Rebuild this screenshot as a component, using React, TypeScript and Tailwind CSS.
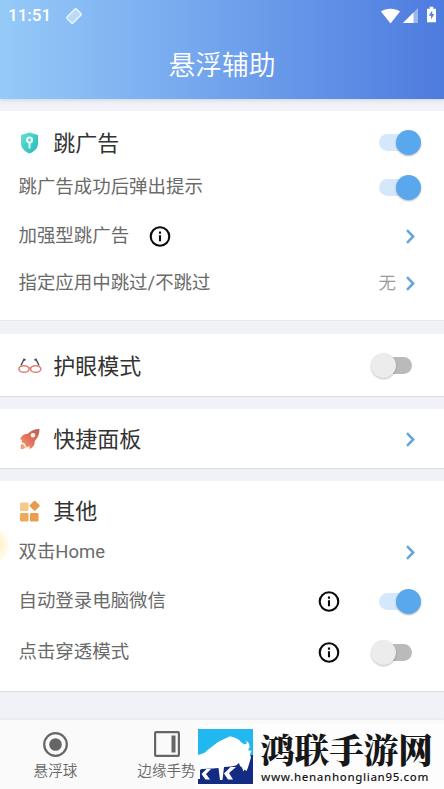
import React from "react";

const cjk = "font-['Roboto','Noto_Sans_CJK_SC',sans-serif]";

function Toggle({ on }: { on?: boolean }) {
  return on ? (
    <div className="relative h-[25px] w-[42px] shrink-0">
      <div className="absolute top-[4px] left-0 h-[17px] w-[34px] rounded-full bg-[#d5e8fb]" />
      <div className="absolute top-0 right-0 size-[25px] rounded-full bg-[#59a8ee] shadow-[0_1px_2px_rgba(0,0,0,0.3)]" />
    </div>
  ) : (
    <div className="relative mr-[9px] h-[25px] w-[41px] shrink-0">
      <div className="absolute top-[4px] right-0 h-[17px] w-[34px] rounded-full bg-[#bababa]" />
      <div className="absolute top-0 left-0 size-[25px] rounded-full bg-[#ececec] shadow-[0_1px_2px_rgba(0,0,0,0.25)]" />
    </div>
  );
}

function Chevron() {
  return (
    <svg className="mr-[6px] ml-[10px] h-[15px] w-[9px] shrink-0" viewBox="0 0 9 15" fill="none" stroke="#62a5df" strokeWidth="2.5">
      <path d="M1 1.2 7.2 7.5 1 13.8" />
    </svg>
  );
}

function Info({ className = "" }: { className?: string }) {
  return (
    <svg className={"size-[22px] shrink-0 " + className} viewBox="0 0 22 22" fill="none" stroke="#0a0a0a" strokeWidth="2.1">
      <circle cx="11" cy="10.500" r="9.300" />
      <path d="M11 9.300v6M11 5.500v2.200" />
    </svg>
  );
}

function Shield() {
  return (
    <svg className="size-[22px]" viewBox="0 0 22 22">
      <defs>
        <linearGradient id="shield" x1="0" y1="0" x2="1" y2="1">
          <stop stopColor="#69e0d3" />
          <stop offset="1" stopColor="#20b9b8" />
        </linearGradient>
      </defs>
      <path fill="url(#shield)" d="M10.500 0.500 19 3v8.500c0 4.800-3.700 8-8.500 10.100C5.700 19.500 2 16.300 2 11.500V3Z" />
      <circle cx="10.500" cy="8" r="2.500" fill="none" stroke="#ecfffd" strokeWidth="2.200" />
      <path d="M10.500 10.500v6" stroke="#ecfffd" strokeWidth="2" />
    </svg>
  );
}

function Glasses() {
  return (
    <svg className="h-[16px] w-[24px]" viewBox="0 0 24 16" fill="none">
      <path d="M3 7.500 6 1.300l1.600.8M21 7.500l-3-6.200-1.600.8" stroke="#42465e" strokeWidth="1.400" />
      <ellipse cx="6" cy="11" rx="5.100" ry="3.300" stroke="#df7d72" strokeWidth="1.500" />
      <ellipse cx="17.700" cy="11" rx="5.100" ry="3.300" stroke="#df7d72" strokeWidth="1.500" />
      <path d="M11 10.500q1-1 2 0" stroke="#df7d72" strokeWidth="1.500" />
    </svg>
  );
}

function Rocket() {
  return (
    <svg className="size-[22px]" viewBox="0 0 22 22">
      <defs>
        <linearGradient id="rocket" x1="1" y1="0" x2="0" y2="1">
          <stop stopColor="#b95d5c" />
          <stop offset=".5" stopColor="#e17059" />
          <stop offset="1" stopColor="#f2a274" />
        </linearGradient>
      </defs>
      <path fill="url(#rocket)" d="M20.500 1C15.600 1 11.800 2.500 8.500 6 5.400 5.500 2.800 7.500 1 11l2 1-.5 3 5 4.500 3-1.500v3c3.600-1.500 5.600-4.300 5.200-8C19 10 20.500 6 20.500 1Z" />
      <circle cx="14" cy="7.200" r="2.300" fill="#fff4ed" />
      <path fill="#f0a07a" d="M2.300 15.800c2.300-1 5 1.500 4.200 4-1.300 1.200-3 1.400-4.700 1.200-.3-1.600 0-3.800.5-5.200Z" />
      <path d="m2 15 3 .8 1.700 3.200" stroke="#fff6ef" strokeWidth="1.400" fill="none" />
    </svg>
  );
}

function Apps() {
  return (
    <svg className="size-[22px]" viewBox="0 0 22 22">
      <rect x="1" y="2.500" width="8.500" height="8.500" rx="1.200" fill="#f5c98b" />
      <rect x="1" y="13" width="8.500" height="8.500" rx="1.200" fill="#edaa5d" />
      <rect x="11" y="13" width="8.500" height="8.500" rx="1.200" fill="#e99d4d" />
      <rect x="11.800" y="1.900" width="7.700" height="7.700" rx="1" fill="#e69a4d" transform="rotate(45 15.650 5.750)" />
    </svg>
  );
}

function Heading({ icon, text, children, className }: { icon: React.ReactNode; text: string; children?: React.ReactNode; className: string }) {
  return (
    <div className={"flex items-center " + className}>
      <div className="flex w-[34.300px] shrink-0">{icon}</div>
      <h2 className="flex-1 pt-[2px] text-[22px] leading-[30px] text-[#333]">{text}</h2>
      {children}
    </div>
  );
}

function Row({ text, children, info, className }: { text: string; children: React.ReactNode; info?: boolean; className: string }) {
  return (
    <div className={"flex items-center text-[18.450px] text-[#6a6a6a] " + className}>
      <span className="-ml-[0.500px] leading-[27px] font-[380]">{text}</span>
      {info && <Info className="ml-[19.500px]" />}
      <div className="flex-1" />
      {children}
    </div>
  );
}

function Bison() {
  return (
    <svg className="h-[55px] w-[55px] shrink-0" viewBox="0 0 55 55">
      <path fill="#20b8ee" d="M0 0h55v27H0Z" />
      <path fill="#142b83" d="M0 26h55v29H0Z" />
      <path
        fill="#fff"
        d="M0 26C4 24.500 6 25 9 21.500L20 13 32 7.200C37 8.500 40 9.500 43 13c2 2 4.500 3 5.500 1.500 1-1.500-.5-2-1.500-3C50 12 52 15 51.500 18.500L50 21l3.500 1-1.500 3 1 3.500-3 10-1.500 3.500-2-1.500-1 2-1.500-4-2-1.500-1-3-3 2.500-5 1-7 .5-1.500 13H22l-1.500-12-6 .5-11 .5L2 41v9H0Z"
      />
      <path fill="#fff" d="M8.500 40H13l-5 5 4 5.500H7.500L3.500 45ZM32.500 38H38l-7 6 4 6.500h-5L26 44.500Z" />
    </svg>
  );
}

export default function App() {
  return (
    <main className={"relative flex h-[789px] w-[444px] flex-col overflow-hidden bg-[#f0f2f7] " + cjk}>
      <header className="z-10 h-[99px] shrink-0 bg-linear-to-r from-[#96caf8] to-[#4e7bdf] text-white shadow-[0_1px_4px_rgba(60,80,120,0.2)]">
        <div className="flex h-[31px] items-center pr-[8px] pl-[8px]">
          <span className="w-[43px] text-[17px] font-medium">11:51</span>
          <svg className="ml-[14px] size-[18px]" viewBox="0 0 17 17">
            <rect x="2.200" y="4.500" width="12.600" height="8" rx="1" transform="rotate(-45 8.500 8.500)" fill="#bddaf5" stroke="#e8f6ff" strokeWidth="1.300" />
          </svg>
          <div className="flex-1" />
          <svg className="h-[16px] w-[19px]" viewBox="0 0 19 16"><path fill="#fff" d="M0 3.500C5-.3 14-.3 19 3.500L9.500 15.500Z" /></svg>
          <svg className="ml-[3px] h-[15px] w-[15px]" viewBox="0 0 15 15"><path fill="#9bb8ee" d="M15 0v15H0Z" /><path fill="#fff" d="M10.500 4.500V15H0Z" /></svg>
          <svg className="mb-[2px] ml-[9px] h-[17px] w-[9px]" viewBox="0 0 10 17"><path fill="#fff" d="M3 0h4v2h3v15H0V2h3Z" /><path fill="#5280df" d="M5.800 4 2 10h2.500v4L8 8H5.800Z" /></svg>
        </div>
        <h1 className="pt-[15px] text-center text-[26.800px] leading-[40px] font-[350]">悬浮辅助</h1>
      </header>

      <section className="mt-[12px] h-[210px] shrink-0 border-b border-[#e7e9ed] bg-white pr-[23px] pl-[19px]">
        <Heading className="h-[63px]" icon={<Shield />} text="跳广告"><Toggle on /></Heading>
        <Row className="h-[27px]" text="跳广告成功后弹出提示"><Toggle on /></Row>
        <Row className="mt-[22px] h-[27px]" text="加强型跳广告" info><Chevron /></Row>
        <Row className="mt-[20px] h-[27px]" text="指定应用中跳过/不跳过"><span className="text-[17.500px] font-[350] text-[#999]">无</span><Chevron /></Row>
      </section>

      <section className="mt-[13px] h-[63px] shrink-0 border-b border-[#dcdee2] bg-white pr-[23px] pl-[19px]">
        <Heading className="h-[63px]" icon={<span className="-ml-px"><Glasses /></span>} text="护眼模式"><Toggle /></Heading>
      </section>

      <section className="mt-[12px] h-[60px] shrink-0 border-b border-[#dcdee2] bg-white pr-[23px] pl-[19px]">
        <Heading className="h-[60px]" icon={<Rocket />} text="快捷面板"><Chevron /></Heading>
      </section>

      <section className="relative mt-[12px] h-[211px] shrink-0 border-b border-[#dcdee2] bg-white pr-[23px] pl-[19px]">
        <div className="absolute top-[46px] -left-[27px] size-[36px] rounded-full bg-[radial-gradient(circle,#fff3c8_30%,#fffaeb_65%)]" />
        <Heading className="h-[60px]" icon={<Apps />} text="其他" />
        <Row className="-mt-[2px] h-[27px]" text="双击Home"><Chevron /></Row>
        <Row className="mt-[22px] h-[27px]" text="自动登录电脑微信"><Info className="mr-[39px]" /><Toggle on /></Row>
        <Row className="mt-[24px] h-[27px]" text="点击穿透模式"><Info className="mr-[31px]" /><Toggle /></Row>
      </section>

      <nav className="mt-[28px] flex h-[69px] shrink-0 bg-[#fafafa] text-[14.600px] text-[#686868] shadow-[0_-1px_3px_rgba(0,0,0,0.06)]">
        <div className="flex w-[111px] flex-col items-center pt-[12px]">
          <svg className="size-[25px]" viewBox="0 0 25 25" fill="none"><circle cx="12.500" cy="12.500" r="11.300" stroke="#666" strokeWidth="2.200" /><circle cx="12.500" cy="12.500" r="6.300" fill="#666" /></svg>
          <span className="mt-[3px] leading-[22px] font-[350]">悬浮球</span>
        </div>
        <div className="flex w-[111px] flex-col items-center pt-[11px]">
          <svg className="size-[26px]" viewBox="0 0 26 26" fill="none" stroke="#666"><rect x="1.100" y="1.100" width="23.800" height="23.800" rx="1" strokeWidth="2.200" /><path d="M19.500 4.500v17" strokeWidth="4" /></svg>
          <span className="mt-[3px] leading-[22px] font-[350]">边缘手势</span>
        </div>
      </nav>

      <aside className="absolute right-0 bottom-0 flex h-[65px] w-[249px] bg-[#fdfdfd] pt-[5px] pl-[3px]">
        <Bison />
        <div className="ml-[7px] text-[#171717]">
          <div className="font-['Noto_Serif_CJK_SC','Noto_Sans_CJK_SC',serif] text-[34.600px] leading-[38px] font-black whitespace-nowrap">鸿联手游网</div>
          <div className="mt-px ml-px font-['Noto_Sans',sans-serif] text-[11.500px] leading-[18px] font-medium tracking-[0.620px]">www.henanhonglian95.com</div>
        </div>
      </aside>
    </main>
  );
}
